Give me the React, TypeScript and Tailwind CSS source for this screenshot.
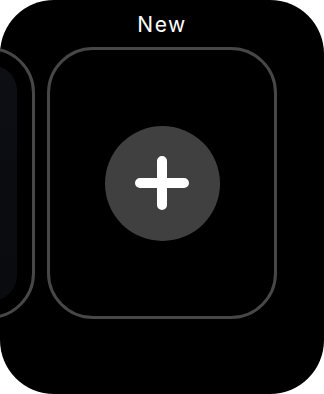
import React from "react";

const PlusIcon = () => (
  <svg width="56" height="56" viewBox="0 0 56 56" fill="none">
    <path
      d="M28 6 V50 M6 28 H50"
      stroke="#ffffff"
      strokeWidth="10"
      strokeLinecap="round"
    />
  </svg>
);

const App = () => {
  return (
    <div className="w-[324px] h-[394px] bg-white">
      <div className="w-full h-full bg-black rounded-[54px] overflow-hidden flex flex-col">
        <div
          className="pt-3 h-[37px] text-center text-white text-[21px] leading-[25px] tracking-[1.5px]"
          style={{ fontFamily: "Inter, 'Noto Sans', sans-serif" }}
        >
          New
        </div>
        <div className="mt-[10px] flex gap-3 pl-[47px]">
          {/* previous face, mostly off-screen */}
          <div className="-ml-[242px] w-[230px] h-[272px] shrink-0 rounded-[46px] border-[3px] border-[#474747] p-[15px]">
            <div className="w-full h-full rounded-[26px] bg-gradient-to-b from-[#0d0f14] via-[#0b0c10] to-[#0a0b0e]" />
          </div>
          {/* add new face */}
          <div className="w-[230px] h-[272px] shrink-0 rounded-[46px] border-[3px] border-[#474747] flex items-center justify-center">
            <div className="w-[115px] h-[115px] rounded-full bg-[#404040] flex items-center justify-center">
              <PlusIcon />
            </div>
          </div>
        </div>
      </div>
    </div>
  );
};

export default App;
